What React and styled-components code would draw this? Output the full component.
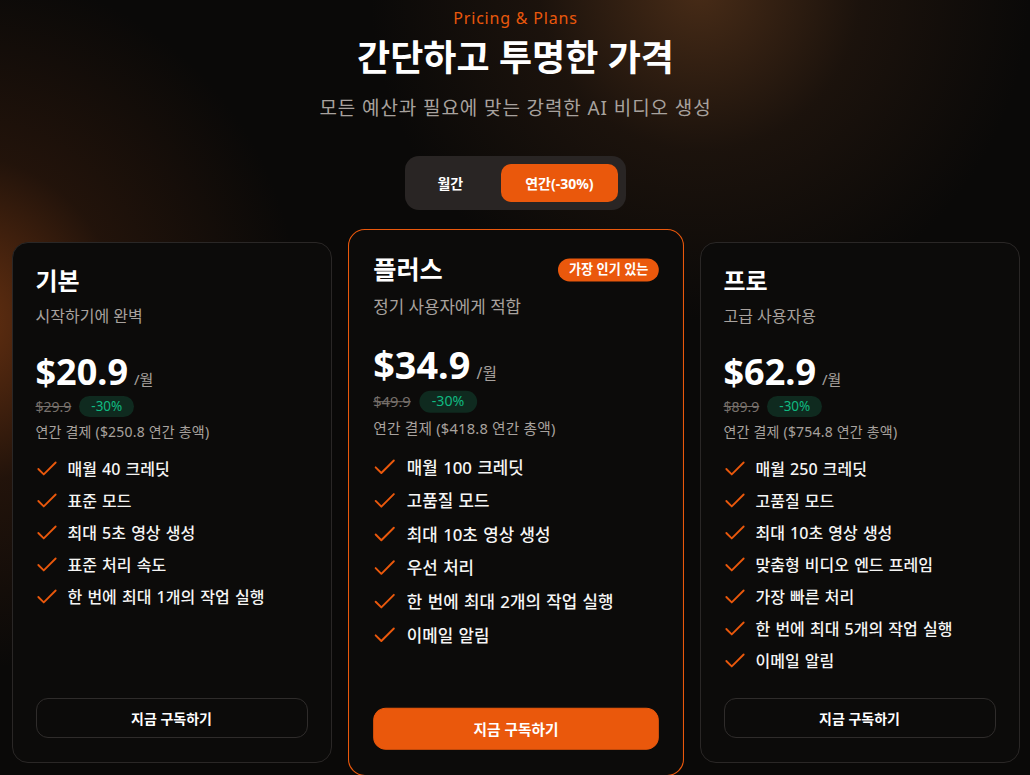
import React, { useState } from 'react';
import styled, { createGlobalStyle } from 'styled-components';
import { Check } from 'lucide-react';

const GlobalStyle = createGlobalStyle`
  * { box-sizing: border-box; }
  html, body { margin: 0; padding: 0; background: #0a0908; }
  body {
    font-family: "Noto Sans", "Noto Sans CJK KR", sans-serif;
    color: #fafafa;
    overflow: hidden;
  }
`;

const Page = styled.section`
  height: 775px;
  overflow: hidden;
  padding: 6px 11px 0 12px;
  background:
    radial-gradient(circle at 700px -10px, rgba(92, 55, 28, 0.75) 0, rgba(60, 36, 20, 0.35) 160px, rgba(10, 9, 8, 0) 330px),
    radial-gradient(ellipse 330px 340px at -40px 320px, rgba(115, 54, 18, 0.9) 0, rgba(70, 34, 14, 0.4) 160px, rgba(10, 9, 8, 0) 340px),
    #0a0908;
`;

const Header = styled.header`
  display: flex;
  flex-direction: column;
  align-items: center;
  text-align: center;
`;

const Eyebrow = styled.span`
  color: #ea580c;
  font-size: 16px;
  line-height: 24px;
  letter-spacing: 0.8px;
`;

const Title = styled.h1`
  margin: 6px 0 0;
  font-size: 36px;
  line-height: 44px;
  font-weight: 700;
  color: #fff;
`;

const Subtitle = styled.p`
  margin: 14px 0 0;
  font-size: 19px;
  line-height: 28px;
  letter-spacing: 0.9px;
  color: #a8a29e;
`;

const Toggle = styled.div`
  margin-top: 34px;
  display: flex;
  gap: 14px;
  padding: 8px;
  border-radius: 14px;
  background: #292524;
`;

const ToggleButton = styled.button`
  height: 38px;
  padding: 0 24px;
  border: none;
  border-radius: 10px;
  font-family: inherit;
  font-size: 14px;
  font-weight: 700;
  color: #fff;
  cursor: pointer;
  background: ${({ $active }) => ($active ? '#ea580c' : 'transparent')};
`;

const Grid = styled.div`
  margin-top: 32px;
  display: grid;
  grid-template-columns: repeat(3, 320px);
  gap: 24px;
  justify-content: center;
`;

const Card = styled.article`
  display: flex;
  flex-direction: column;
  min-height: 521px;
  padding: 22px 23px 24px;
  border-radius: 16px;
  background: #0c0b0a;
  border: 1px solid ${({ $featured }) => ($featured ? '#ea580c' : '#2a2726')};
  transform: ${({ $featured }) => ($featured ? 'scale(1.05)' : 'none')};
`;

const TitleRow = styled.div`
  display: flex;
  align-items: center;
  justify-content: space-between;
`;

const PlanName = styled.h2`
  margin: 0;
  font-size: 24px;
  line-height: 32px;
  font-weight: 700;
  color: #fff;
`;

const Popular = styled.span`
  height: 22px;
  padding: 0 10px;
  border-radius: 999px;
  background: #ea580c;
  color: #fff;
  font-size: 12.5px;
  font-weight: 700;
  line-height: 22px;
`;

const PlanDesc = styled.p`
  margin: 8px 0 0;
  font-size: 16px;
  line-height: 22px;
  color: #a8a29e;
`;

const PriceRow = styled.div`
  margin-top: 25px;
  display: flex;
  align-items: baseline;
  gap: 6px;
  height: 40px;
`;

const Price = styled.span`
  font-size: 36px;
  line-height: 40px;
  font-weight: 700;
  color: #fff;
`;

const Per = styled.span`
  font-size: 15px;
  line-height: 20px;
  color: #a8a29e;
`;

const DiscountRow = styled.div`
  margin-top: 4px;
  display: flex;
  align-items: center;
  gap: 8px;
  height: 21px;
`;

const OldPrice = styled.span`
  font-size: 14px;
  line-height: 18px;
  color: #78716c;
  text-decoration: line-through;
`;

const Saving = styled.span`
  height: 21px;
  padding: 0 12px;
  border-radius: 999px;
  background: #0f2a1f;
  color: #10b981;
  font-size: 13.5px;
  line-height: 21px;
`;

const Billing = styled.p`
  margin: 5px 0 0;
  font-size: 14px;
  line-height: 20px;
  letter-spacing: 0.2px;
  color: #a8a29e;
`;

const Features = styled.ul`
  list-style: none;
  margin: 15px 0 0;
  padding: 0;
  display: flex;
  flex-direction: column;
  gap: 8px;
`;

const Feature = styled.li`
  display: flex;
  align-items: center;
  gap: 8px;
  height: 24px;
  margin-left: -2px;
  font-size: 16px;
  line-height: 24px;
  font-weight: 500;
  word-spacing: 1px;
  color: #f5f5f4;

  svg {
    display: block;
    flex-shrink: 0;
    color: #ea580c;
  }
`;

const Subscribe = styled.button`
  margin-top: auto;
  height: 40px;
  width: 100%;
  border-radius: 12px;
  font-family: inherit;
  font-size: 14px;
  font-weight: 700;
  color: #fff;
  cursor: pointer;
  border: 1px solid ${({ $primary }) => ($primary ? '#ea580c' : '#2f2c2b')};
  background: ${({ $primary }) => ($primary ? '#ea580c' : 'transparent')};
`;

const plans = [
  {
    name: '기본',
    desc: '시작하기에 완벽',
    price: '$20.9',
    old: '$29.9',
    total: '$250.8',
    features: ['매월 40 크레딧', '표준 모드', '최대 5초 영상 생성', '표준 처리 속도', '한 번에 최대 1개의 작업 실행'],
  },
  {
    name: '플러스',
    desc: '정기 사용자에게 적합',
    price: '$34.9',
    old: '$49.9',
    total: '$418.8',
    featured: true,
    features: ['매월 100 크레딧', '고품질 모드', '최대 10초 영상 생성', '우선 처리', '한 번에 최대 2개의 작업 실행', '이메일 알림'],
  },
  {
    name: '프로',
    desc: '고급 사용자용',
    price: '$62.9',
    old: '$89.9',
    total: '$754.8',
    features: [
      '매월 250 크레딧',
      '고품질 모드',
      '최대 10초 영상 생성',
      '맞춤형 비디오 엔드 프레임',
      '가장 빠른 처리',
      '한 번에 최대 5개의 작업 실행',
      '이메일 알림',
    ],
  },
];

const PlanCard = ({ plan }) => (
  <Card $featured={plan.featured}>
    <TitleRow>
      <PlanName>{plan.name}</PlanName>
      {plan.featured && <Popular>가장 인기 있는</Popular>}
    </TitleRow>
    <PlanDesc>{plan.desc}</PlanDesc>
    <PriceRow>
      <Price>{plan.price}</Price>
      <Per>/월</Per>
    </PriceRow>
    <DiscountRow>
      <OldPrice>{plan.old}</OldPrice>
      <Saving>-30%</Saving>
    </DiscountRow>
    <Billing>연간 결제 ({plan.total} 연간 총액)</Billing>
    <Features>
      {plan.features.map((f) => (
        <Feature key={f}>
          <Check size={26} strokeWidth={1.7} />
          {f}
        </Feature>
      ))}
    </Features>
    <Subscribe $primary={plan.featured}>지금 구독하기</Subscribe>
  </Card>
);

const App = () => {
  const [yearly, setYearly] = useState(true);

  return (
    <Page>
      <GlobalStyle />
      <Header>
        <Eyebrow>Pricing &amp; Plans</Eyebrow>
        <Title>간단하고 투명한 가격</Title>
        <Subtitle>모든 예산과 필요에 맞는 강력한 AI 비디오 생성</Subtitle>
        <Toggle>
          <ToggleButton $active={!yearly} onClick={() => setYearly(false)}>
            월간
          </ToggleButton>
          <ToggleButton $active={yearly} onClick={() => setYearly(true)}>
            연간(-30%)
          </ToggleButton>
        </Toggle>
      </Header>
      <Grid>
        {plans.map((p) => (
          <PlanCard key={p.name} plan={p} />
        ))}
      </Grid>
    </Page>
  );
};

export default App;
